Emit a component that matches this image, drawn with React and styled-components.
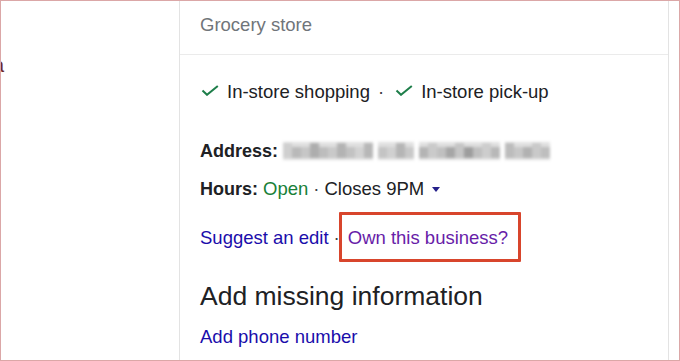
import styled, { createGlobalStyle } from 'styled-components';

const GlobalStyle = createGlobalStyle`
  body {
    margin: 0;
    background: #ffffff;
    font-family: "Liberation Sans", Arial, sans-serif;
  }
`;

const BLUR_SEGMENTS = [
  ['#cfcfcf', '#b9b9b9', '#c6c6c6', '#adadad', '#bdbdbd', '#c9c9c9', '#b3b3b3', '#c2c2c2', '#d2d2d2', '#b7b7b7'],
  ['#c4c4c4', '#d0d0d0', '#b5b5b5', '#c8c8c8'],
  ['#b4b4b4', '#cacaca', '#c0c0c0', '#a6a6a6', '#c5c5c5', '#9d9d9d', '#bfbfbf', '#cdcdcd', '#b8b8b8'],
  ['#bcbcbc', '#c7c7c7', '#b1b1b1', '#c9c9c9', '#bebebe'],
];

const App = () => {
  return (
    <>
      <GlobalStyle />
      <Frame>
        <Gutter>
          <Stray>a</Stray>
        </Gutter>
        <Panel>
          <Header>Grocery store</Header>
          <Body>
            <Services>
              <Service>
                <Check />
                In-store shopping
              </Service>
              <Sep $right={10}>·</Sep>
              <Service>
                <Check />
                In-store pick-up
              </Service>
            </Services>
            <Row $top={37}>
              <Label>Address:</Label>
              <Blurred>
                {BLUR_SEGMENTS.map((seg, i) => (
                  <BlurWord key={i}>
                    {seg.map((c, j) => (
                      <BlurCell key={j} $c={c} $tall={(i + j) % 3 === 0} />
                    ))}
                  </BlurWord>
                ))}
              </Blurred>
            </Row>
            <Row $top={16}>
              <Label>Hours:</Label>
              <Open>Open</Open>
              <Sep $right={5} $left={5}>·</Sep>
              Closes 9PM
              <Caret />
            </Row>
            <Row $top={27}>
              <Link>Suggest an edit</Link>
              <Sep $left={5} $right={8}>·</Sep>
              <Highlighted>Own this business?</Highlighted>
            </Row>
            <Heading>Add missing information</Heading>
            <Row $top={15}>
              <Link>Add phone number</Link>
            </Row>
          </Body>
        </Panel>
        <Gutter $right />
      </Frame>
    </>
  );
};

const Check = () => (
  <CheckSvg width="18" height="11" viewBox="0 0 18 11">
    <polyline points="1.5,5.5 6,9.8 16.8,1" fill="none" stroke="#1e7e4a" strokeWidth="2" />
  </CheckSvg>
);

export default App;

const Frame = styled.div`
  box-sizing: border-box;
  width: 680px;
  height: 361px;
  border: 1px solid #dba7a7;
  display: flex;
  overflow: hidden;
  background: #ffffff;
`;

const Gutter = styled.div`
  width: ${(p) => (p.$right ? 'auto' : '178px')};
  flex: ${(p) => (p.$right ? '1' : 'none')};
  padding-top: 54px;
`;

const Stray = styled.span`
  display: block;
  margin-left: -8px;
  font-size: 20px;
  line-height: 20px;
  color: #6e2a2a;
`;

const Panel = styled.div`
  box-sizing: border-box;
  width: 490px;
  border-left: 1px solid #e3e3e3;
  border-right: 1px solid #e3e3e3;
  font-size: 18.5px;
  color: #202124;
`;

const Header = styled.div`
  box-sizing: border-box;
  height: 54px;
  padding: 13px 0 0 20px;
  line-height: 22px;
  color: #70757a;
  border-bottom: 1px solid #ebebeb;
`;

const Body = styled.div`
  padding: 26px 0 0 20px;
`;

const Services = styled.div`
  display: flex;
  align-items: center;
  height: 22px;
  line-height: 22px;
`;

const Service = styled.span`
  display: flex;
  align-items: center;
`;

const CheckSvg = styled.svg`
  flex: none;
  margin: 0 8px 3px 1px;
`;

const Sep = styled.span`
  margin-left: ${(p) => (p.$left ?? 8)}px;
  margin-right: ${(p) => p.$right}px;
  color: #3c4043;
`;

const Row = styled.div`
  display: flex;
  align-items: center;
  height: 22px;
  line-height: 22px;
  margin-top: ${(p) => p.$top}px;
  white-space: nowrap;
`;

const Label = styled.span`
  font-weight: bold;
  font-size: 18px;
  margin-right: 5px;
`;

const Open = styled.span`
  color: #188038;
`;

const Caret = styled.span`
  width: 0;
  height: 0;
  margin: 1px 0 0 8px;
  border-left: 4.5px solid transparent;
  border-right: 4.5px solid transparent;
  border-top: 5px solid #25208a;
`;

const Blurred = styled.span`
  display: flex;
  gap: 5px;
  height: 18px;
  filter: blur(1.8px);
`;

const BlurWord = styled.span`
  display: flex;
  background: #e0e0e0;
  align-items: flex-end;
  padding-bottom: 2px;
  box-sizing: border-box;
`;

const BlurCell = styled.span`
  width: 9px;
  height: ${(p) => (p.$tall ? 15 : 11)}px;
  background: ${(p) => p.$c};
`;

const Link = styled.span`
  color: #1a0dab;
`;

const Highlighted = styled.span`
  position: relative;
  color: #681da8;
  &::after {
    content: '';
    position: absolute;
    top: -15px;
    bottom: -13px;
    left: -9px;
    right: -13px;
    border: 3px solid #d8452c;
    border-radius: 1px;
  }
`;

const Heading = styled.div`
  margin-top: 32px;
  font-size: 26.5px;
  line-height: 30px;
  height: 30px;
  color: #202124;
`;
